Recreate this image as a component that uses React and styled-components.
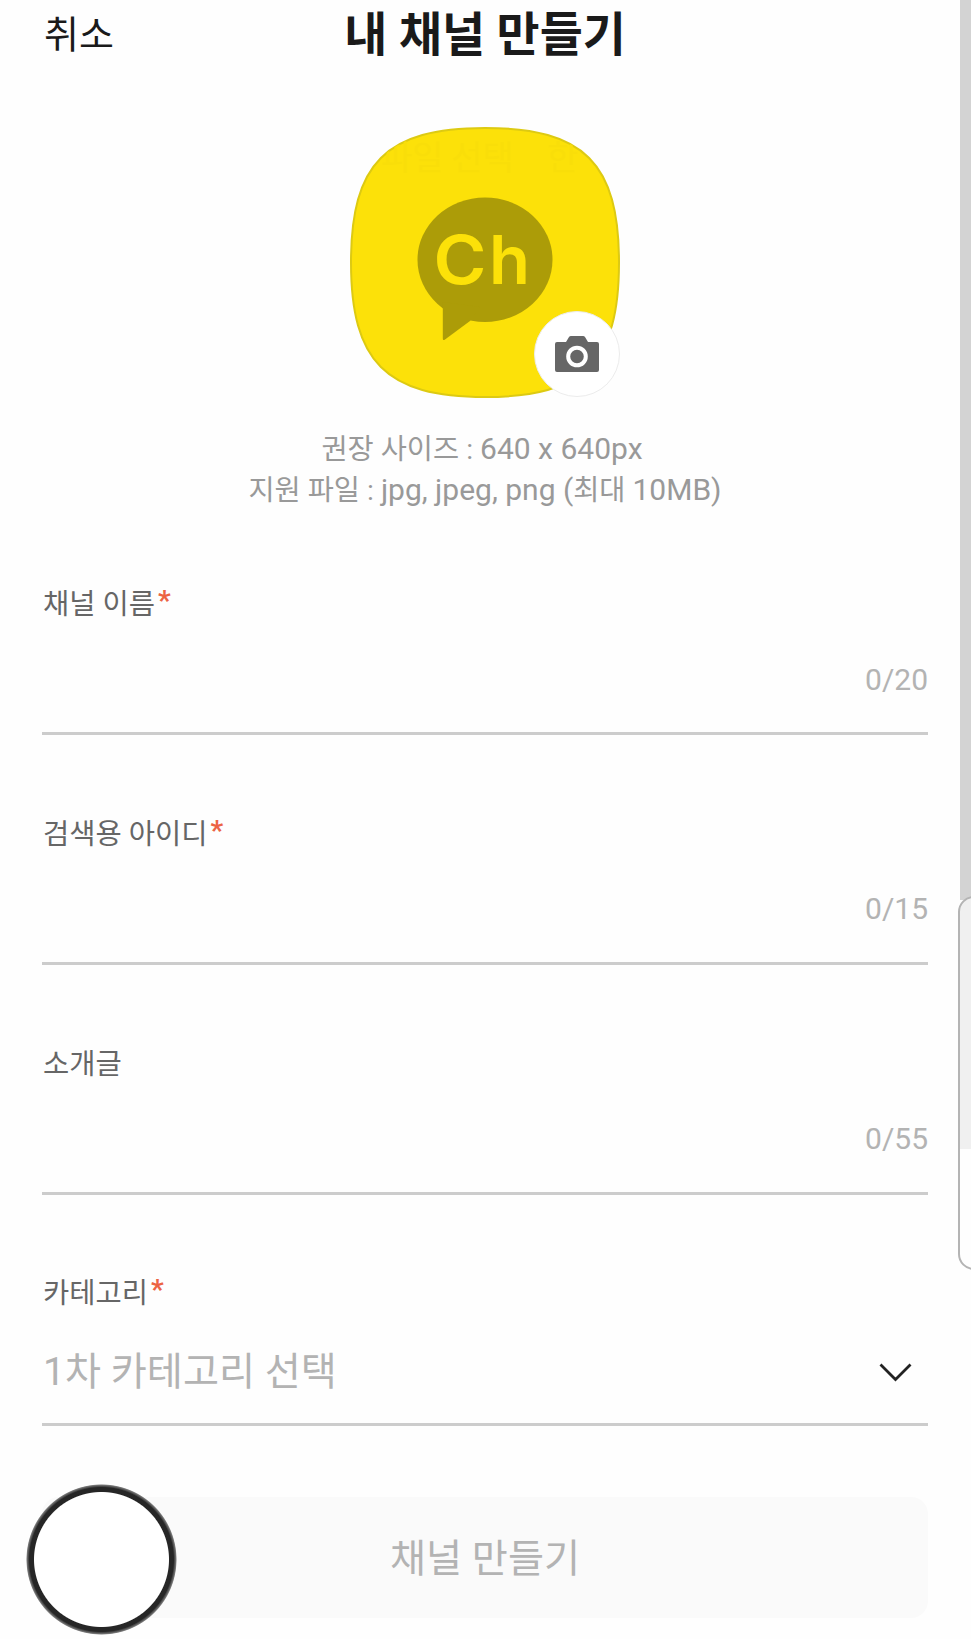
import React from 'react'
import styled, { createGlobalStyle } from 'styled-components';

const GlobalStyle = createGlobalStyle`
  * {
    box-sizing: border-box;
  }

  body {
    margin: 0;
    background: #fefefe;
    font-family: Roboto, "Noto Sans CJK KR", sans-serif;
    overflow: hidden;
  }

  button {
    border: 0;
    padding: 0;
    background: none;
    font-family: inherit;
  }
`;

const Page = styled.div`
  position: relative;
  height: 1639px;
  padding: 0 43px 0 42px;
  overflow: hidden;
`;

const Header = styled.header`
  display: grid;
  grid-template-columns: 1fr auto 1fr;
  align-items: center;
  height: 70px;
`;

const CancelButton = styled.button`
  justify-self: start;
  padding-left: 2px;
  font-size: 38px;
  line-height: 68px;
  color: #1a1a1a;
`;

const Title = styled.h1`
  margin: 0;
  font-size: 46.8px;
  font-weight: 700;
  line-height: 68px;
  color: #1a1a1a;
`;

const Profile = styled.section`
  display: flex;
  flex-direction: column;
  align-items: center;
  padding-top: 57px;
`;

const ProfileImage = styled.div`
  position: relative;
  width: 270px;
  height: 271px;

  > svg {
    display: block;
  }
`;

const CameraButton = styled.button`
  position: absolute;
  right: 0;
  bottom: 1px;
  display: flex;
  align-items: center;
  justify-content: center;
  width: 86px;
  height: 86px;
  border: 1px solid #ececec;
  border-radius: 50%;
  background: #fff;
`;

const Guide = styled.p`
  margin: 30px 0 0;
  font-size: 28.4px;
  line-height: 41px;
  text-align: center;
  color: #999;
`;

const GuideLine = styled.span`
  display: block;
  height: 41px;
  transform: translateX(${(props) => props.$shift || 0});
`;

const Latin = styled.span`
  font-size: 30px;
`;

const Form = styled.form`
  padding-top: 73px;
`;

const Field = styled.div`
  display: flex;
  flex-direction: column;
  height: ${(props) => props.$height || 229.8}px;
`;

const Label = styled.label`
  display: flex;
  height: 40px;
  padding-left: 1px;
  font-size: 28.5px;
  line-height: 43px;
  color: #666;
`;

const Required = styled.span`
  padding-left: 3px;
  font-size: 28px;
  font-weight: 700;
  line-height: 35px;
  color: #ec6444;
`;

const InputBox = styled.div`
  display: flex;
  align-items: center;
  justify-content: ${(props) => (props.$select ? 'space-between' : 'flex-end')};
  height: ${(props) => (props.$select ? 114 : 112)}px;
  padding-top: ${(props) => (props.$select ? 9 : 4)}px;
  border-bottom: 3px solid #ccc;
`;

const Counter = styled.span`
  font-size: 30px;
  line-height: 40px;
  color: #b3b3b3;
`;

const Placeholder = styled.span`
  padding-left: 1px;
  font-size: 39.2px;
  line-height: 56px;
  color: #b3b3b3;
`;

const Chevron = styled.svg`
  margin: 1px 16px 0 0;
`;

const SubmitButton = styled.button`
  display: block;
  width: 100%;
  height: 121px;
  padding-bottom: 6px;
  border-radius: 17px;
  background: #fafafa;
  font-size: 39.2px;
  color: #b3b3b3;
`;

const TouchMark = styled.div`
  position: absolute;
  left: 26px;
  top: 1484px;
  width: 151px;
  height: 151px;
  border-radius: 50%;
  background: radial-gradient(circle closest-side, #fff 67px, #262626 68px, #262626 72px, #777 74.5px, transparent 75.5px);
`;

const ScrollTrack = styled.div`
  position: absolute;
  right: 0;
  top: 0;
  width: 11px;
  height: 900px;
  background: #d3d3d3;
`;

const EdgePanel = styled.div`
  position: absolute;
  right: -20px;
  top: 896px;
  width: 33px;
  height: 374px;
  border: 2px solid #b4b4b4;
  border-radius: 16px;
  background: linear-gradient(#f0f0f0 251px, #fefefe 251px);
`;

const fields = [
    { id: 'name', label: '채널 이름', required: true, max: 20 },
    { id: 'searchId', label: '검색용 아이디', required: true, max: 15 },
    { id: 'intro', label: '소개글', required: false, max: 55 },
];

const shape = 'M1 135.5C1 36 36 1 135 1S269 36 269 135.5 234 270 135 270 1 235 1 135.5Z';

const ChannelLogo = () => (
    <svg width="270" height="271" viewBox="0 0 270 271">
        <clipPath id="logo-shape">
            <path d={shape} />
        </clipPath>
        <path d={shape} fill="#fce109" stroke="#ddca12" strokeWidth="2" />
        {/* faint caption behind the logo */}
        <g clipPath="url(#logo-shape)" fontFamily="Noto Sans CJK KR, sans-serif" fontSize="34" fill="#f9de09">
            <text x="31" y="43">파일 선택</text>
            <text x="197" y="43">한</text>
        </g>
        <ellipse cx="135" cy="132.7" rx="67.5" ry="62.3" fill="#ac9c08" />
        <path d="M92.8 175V211.5Q92.8 214 95 212.5L120 194L130 180Z" fill="#ac9c08" />
        <g fontFamily="Inter, sans-serif" fontSize="67" fontWeight="600" fill="#fce109">
            <text x="83.5" y="157" textLength="53" lengthAdjust="spacingAndGlyphs">C</text>
            <text x="139" y="157">h</text>
        </g>
    </svg>
);

const CameraIcon = () => (
    <svg width="44" height="36" viewBox="0 0 44 36">
        <path d="M2 6H11L14 1Q14.6 0 16 0H28Q29.4 0 30 1L33 6H42Q44 6 44 8V34Q44 36 42 36H2Q0 36 0 34V8Q0 6 2 6Z" fill="#666" />
        <circle cx="22" cy="20.5" r="8.8" fill="none" stroke="#fff" strokeWidth="4" />
    </svg>
);

const App = () => {
    return (
        <>
            <GlobalStyle />
            <Page>
                <Header>
                    <CancelButton type="button">취소</CancelButton>
                    <Title>내 채널 만들기</Title>
                </Header>
                <Profile>
                    <ProfileImage>
                        <ChannelLogo />
                        <CameraButton type="button">
                            <CameraIcon />
                        </CameraButton>
                    </ProfileImage>
                    <Guide>
                        <GuideLine $shift="-3px">권장 사이즈 : <Latin>640 x 640px</Latin></GuideLine>
                        <GuideLine>지원 파일 : <Latin>jpg, jpeg, png (</Latin>최대 <Latin>10MB)</Latin></GuideLine>
                    </Guide>
                </Profile>
                <Form>
                    {fields.map((item) => (
                        <Field key={item.id}>
                            <Label>
                                {item.label}
                                {item.required && <Required>*</Required>}
                            </Label>
                            <InputBox>
                                <Counter>0/{item.max}</Counter>
                            </InputBox>
                        </Field>
                    ))}
                    <Field $height={225}>
                        <Label>
                            카테고리
                            <Required>*</Required>
                        </Label>
                        <InputBox $select>
                            <Placeholder>1차 카테고리 선택</Placeholder>
                            <Chevron width="33" height="19" viewBox="0 0 33 19">
                                <path d="M1.5 1.5L16.5 16.5L31.5 1.5" fill="none" stroke="#222" strokeWidth="2.8" />
                            </Chevron>
                        </InputBox>
                    </Field>
                    <SubmitButton type="button">채널 만들기</SubmitButton>
                </Form>
                <TouchMark />
                <ScrollTrack />
                <EdgePanel />
            </Page>
        </>
    )
}

export default App
